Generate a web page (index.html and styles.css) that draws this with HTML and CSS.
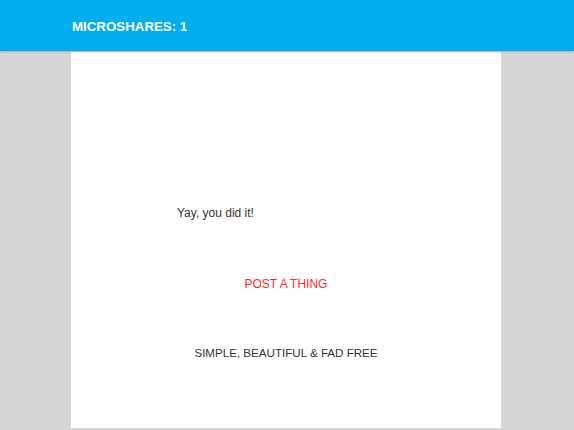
FILE: index.html
```html
<!DOCTYPE html>
<html>
<head>
<meta charset="utf-8">
<link rel="stylesheet" href="styles.css">
</head>
<body>
<header class="topbar">
  <div class="brand">MICROSHARES: 1</div>
</header>
<main class="panel">
  <p class="yay">Yay, you did it!</p>
  <a class="post" href="#">POST A THING</a>
  <p class="tagline">SIMPLE, BEAUTIFUL &amp; FAD FREE</p>
</main>
</body>
</html>
```
FILE: styles.css
```css
html, body {
  margin: 0;
  padding: 0;
  height: 100%;
}
body {
  background: #d6d6d6;
  font-family: "Liberation Sans", Arial, sans-serif;
  overflow: hidden;
}
.topbar {
  height: 51px;
  background: #00adef;
  box-shadow: 0 1px 2px rgba(0,0,0,0.2);
  position: relative;
  z-index: 1;
}
.brand {
  width: 430px;
  margin-left: 72px;
  padding-top: 19px;
  color: #fff;
  font-weight: bold;
  font-size: 13.3px;
  line-height: 15px;
}
.panel {
  width: 430px;
  height: 376px;
  margin-left: 71px;
  margin-top: 1px;
  background: #fff;
  display: flex;
  flex-direction: column;
  align-items: center;
}
.yay {
  align-self: flex-start;
  margin: 154px 0 0 106px;
  font-size: 12px;
  line-height: 14px;
  color: #333;
}
.post {
  margin-top: 57px;
  font-size: 12px;
  line-height: 14px;
  color: #ff2a2a;
  text-decoration: none;
}
.tagline {
  margin: 55px 0 0;
  font-size: 11.6px;
  line-height: 14px;
  color: #333;
}
```
